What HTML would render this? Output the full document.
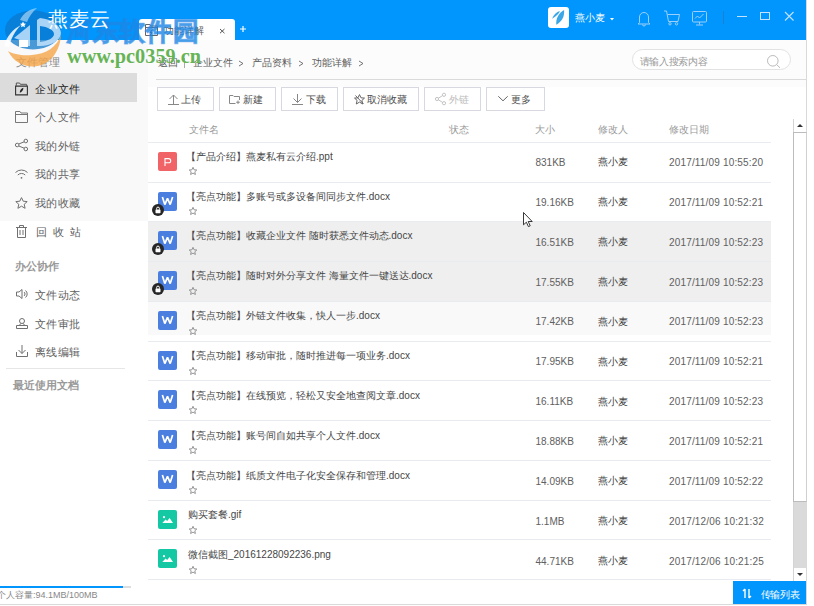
<!DOCTYPE html>
<html><head><meta charset="utf-8"><style>
*{box-sizing:border-box;margin:0;padding:0}
html,body{width:814px;height:606px;overflow:hidden;background:#fff;font-family:"Liberation Sans",sans-serif;font-size:10px;color:#333}
.t{position:absolute;white-space:nowrap;line-height:14px}
.r{position:absolute}
svg{position:absolute;overflow:visible}
</style></head><body>
<div class="r" style="left:0px;top:0px;width:806px;height:40px;background:#0096fd;"></div>
<div class="r" style="left:0px;top:40px;width:148px;height:181px;background:#f9f9f9;"></div>
<div class="r" style="left:148px;top:40px;width:658px;height:47px;background:#fcfcfc;"></div>
<div class="r" style="left:806px;top:0px;width:1px;height:605px;background:#d9d9d9;"></div>
<div class="r" style="left:0px;top:604px;width:807px;height:1px;background:#d9d9d9;"></div>
<div class="r" style="left:139px;top:19px;width:96px;height:21px;background:#fff;border-radius:3px 3px 0 0"></div>
<svg style="left:145px;top:24px" width="13" height="12" viewBox="0 0 13 12"><path d="M0.5 11.5V0.5H5L6 2H12.5V11.5Z M0.5 3.5H12.5" fill="none" stroke="#666"/><path d="M7.5 5.5L5 8.5H6.8L5.5 11" fill="none" stroke="#444"/></svg>
<div class="t" style="left:163.6px;top:24.1px;font-size:10px;color:#555;font-weight:normal;">功能详解</div>
<svg style="left:219.8px;top:28.6px" width="4.5" height="4.2" viewBox="0 0 4.5 4.2"><path d="M0 0L4.5 4.2M4.5 0L0 4.2" stroke="#555" stroke-width="1"/></svg>
<svg style="left:239.5px;top:26px" width="6" height="6" viewBox="0 0 6 6"><path d="M3 0V6M0 3H6" stroke="#fff" stroke-width="1.2"/></svg>
<div class="r" style="left:548px;top:7px;width:21px;height:21px;background:#fff;border-radius:3px"></div>
<svg style="left:548px;top:7px" width="21" height="21" viewBox="0 0 21 21"><path d="M8.3 17.8C7.8 11 10.5 6.5 16.1 3C16.6 10 13.8 14.5 8.3 17.8Z" fill="#3ba7e6"/><path d="M4.1 11.8C5.5 8 8.5 5 11.9 4.1C11.2 6.6 8.5 9.2 4.1 11.8Z" fill="#3ba7e6"/></svg>
<div class="t" style="left:575.4px;top:11.2px;font-size:10px;color:#fff;font-weight:normal;">燕小麦</div>
<svg style="left:610px;top:18px" width="4" height="2.5" viewBox="0 0 4 2.5"><path d="M0 0H4L2 2.5Z" fill="#fff"/></svg>
<svg style="left:637px;top:10px" width="14" height="16" viewBox="0 0 14 16"><path d="M2.5 12.5V7A4.5 4.5 0 0 1 11.5 7V12.5L13 14H1Z" fill="none" stroke="#9ccffb"/><path d="M5.5 14.5A1.5 1.5 0 0 0 8.5 14.5" fill="none" stroke="#9ccffb"/></svg>
<svg style="left:664px;top:10px" width="16" height="16" viewBox="0 0 16 16"><path d="M0 1H2.5L4.5 11.5H14L15.5 4.5H3.5" fill="none" stroke="#9ccffb"/><circle cx="6" cy="13.8" r="1.2" fill="none" stroke="#9ccffb"/><circle cx="12.5" cy="13.8" r="1.2" fill="none" stroke="#9ccffb"/></svg>
<svg style="left:692px;top:11px" width="15" height="15" viewBox="0 0 15 15"><rect x="0.5" y="0.5" width="14" height="10.5" rx="1" fill="none" stroke="#9ccffb"/><path d="M3 7.5L5.5 5 7.5 7 11.5 3" fill="none" stroke="#9ccffb"/><path d="M7.5 11V13.5M4 14H11" stroke="#9ccffb"/></svg>
<div class="r" style="left:723px;top:11px;width:1px;height:13px;background:#1b7fd2;"></div>
<div class="r" style="left:737px;top:16px;width:10px;height:1px;background:#c2e2fd;"></div>
<div class="r" style="left:760px;top:12px;width:10px;height:8px;background:transparent;border:1px solid #c2e2fd"></div>
<svg style="left:785px;top:12px" width="8.5" height="8.5" viewBox="0 0 8.5 8.5"><path d="M0 0L8.5 8.5M8.5 0L0 8.5" stroke="#c2e2fd" stroke-width="1.1"/></svg>
<div class="t" style="left:16.0px;top:55.0px;font-size:11px;color:#888;font-weight:normal;">文件管理</div>
<div class="r" style="left:0px;top:73px;width:137px;height:29px;background:#dcdcdc;"></div>
<svg style="left:15px;top:81.5px" width="13" height="13.5" viewBox="0 0 13 13.5"><path d="M0.6 12.9V4.1H12.4V12.9Z" fill="none" stroke="#333" stroke-width="1.1"/><path d="M1.3 3.9V1H4.6L5.4 2.3H11.6V3.9" fill="none" stroke="#555"/><path d="M4.8 10.8C4.6 8.8 6 6.6 8.4 5.8C8.4 8.2 7 10 4.8 10.8Z" fill="#222"/></svg>
<div class="t" style="left:35.3px;top:82.0px;font-size:11px;color:#222;font-weight:normal;letter-spacing:0.4px">企业文件</div>
<svg style="left:15px;top:111px" width="13" height="12" viewBox="0 0 13 12"><path d="M0.5 11.5V0.5H5L6 2H12.5V11.5Z M0.5 3.5H12.5" fill="none" stroke="#777"/></svg>
<div class="t" style="left:35.0px;top:109.8px;font-size:11px;color:#606060;font-weight:normal;letter-spacing:0.4px">个人文件</div>
<svg style="left:15px;top:139px" width="13" height="12" viewBox="0 0 13 12"><circle cx="2.2" cy="6" r="1.8" fill="none" stroke="#707070"/><circle cx="10.8" cy="2" r="1.8" fill="none" stroke="#707070"/><circle cx="10.8" cy="10" r="1.8" fill="none" stroke="#707070"/><path d="M3.8 5L9.2 2.8M3.8 7L9.2 9.2" stroke="#707070"/></svg>
<div class="t" style="left:35.0px;top:139.0px;font-size:11px;color:#606060;font-weight:normal;letter-spacing:0.4px">我的外链</div>
<svg style="left:15px;top:169px" width="13" height="10" viewBox="0 0 13 10"><path d="M0.5 3.5A8.5 8.5 0 0 1 12.5 3.5M2.8 6A5.2 5.2 0 0 1 10.2 6" fill="none" stroke="#707070"/><circle cx="6.5" cy="8.8" r="0.9" fill="#707070"/></svg>
<div class="t" style="left:35.0px;top:167.2px;font-size:11px;color:#606060;font-weight:normal;letter-spacing:0.4px">我的共享</div>
<svg style="left:15px;top:197px" width="13" height="12" viewBox="0 0 13 12"><path d="M6.5 0.6L8.2 4.2 12.2 4.6 9.2 7.3 10.1 11.3 6.5 9.2 2.9 11.3 3.8 7.3 0.8 4.6 4.8 4.2Z" fill="none" stroke="#707070"/></svg>
<div class="t" style="left:35.0px;top:196.3px;font-size:11px;color:#606060;font-weight:normal;letter-spacing:0.4px">我的收藏</div>
<svg style="left:16px;top:225px" width="11" height="13" viewBox="0 0 11 13"><path d="M1.5 3V12.5H9.5V3M0 2.5H11M3.5 2.5V0.5H7.5V2.5M4 5V10M7 5V10" fill="none" stroke="#707070"/></svg>
<div class="t" style="left:35.7px;top:224.8px;font-size:11px;color:#606060;font-weight:normal;letter-spacing:6.3px">回收站</div>
<div class="t" style="left:15.0px;top:259.0px;font-size:11px;color:#999;font-weight:bold;">办公协作</div>
<svg style="left:16px;top:289px" width="12" height="10" viewBox="0 0 12 10"><path d="M0.5 3H3L6 0.5V9.5L3 7H0.5Z" fill="none" stroke="#707070"/><path d="M8 3A2.5 2.5 0 0 1 8 7M9.5 1.5A4.5 4.5 0 0 1 9.5 8.5" fill="none" stroke="#707070"/></svg>
<div class="t" style="left:35.0px;top:288.0px;font-size:11px;color:#606060;font-weight:normal;letter-spacing:0.4px">文件动态</div>
<svg style="left:16px;top:318px" width="12" height="11" viewBox="0 0 12 11"><circle cx="6" cy="3" r="2.5" fill="none" stroke="#707070"/><path d="M4.5 5.5L3.5 7.5M7.5 5.5L8.5 7.5M0.5 7.5H11.5V10.5H0.5Z" fill="none" stroke="#707070"/></svg>
<div class="t" style="left:35.0px;top:317.0px;font-size:11px;color:#606060;font-weight:normal;letter-spacing:0.4px">文件审批</div>
<svg style="left:16px;top:345px" width="12" height="12" viewBox="0 0 12 12"><path d="M6 0V8.5M2.5 5L6 8.5 9.5 5M0.5 7V11.5H11.5V7" fill="none" stroke="#707070"/></svg>
<div class="t" style="left:35.0px;top:345.0px;font-size:11px;color:#606060;font-weight:normal;letter-spacing:0.4px">离线编辑</div>
<div class="r" style="left:6px;top:368px;width:119px;height:1px;background:#e6e6e6;"></div>
<div class="t" style="left:13.0px;top:378.0px;font-size:11px;color:#999;font-weight:bold;">最近使用文档</div>
<div class="t" style="left:158.4px;top:56.0px;font-size:10px;color:#606060;font-weight:normal;">返回</div>
<div class="r" style="left:184px;top:58px;width:1px;height:10px;background:#aaa;"></div>
<div class="t" style="left:192.6px;top:56.0px;font-size:10px;color:#606060;font-weight:normal;">企业文件</div>
<svg style="left:239.2px;top:60.5px" width="4" height="5" viewBox="0 0 4 5"><path d="M0 0L4 2.5 0 5" fill="none" stroke="#666" stroke-width="0.9"/></svg>
<div class="t" style="left:252.0px;top:56.0px;font-size:10px;color:#606060;font-weight:normal;">产品资料</div>
<svg style="left:298.8px;top:60.5px" width="4" height="5" viewBox="0 0 4 5"><path d="M0 0L4 2.5 0 5" fill="none" stroke="#666" stroke-width="0.9"/></svg>
<div class="t" style="left:311.9px;top:56.0px;font-size:10px;color:#606060;font-weight:normal;">功能详解</div>
<svg style="left:358.5px;top:60.5px" width="4" height="5" viewBox="0 0 4 5"><path d="M0 0L4 2.5 0 5" fill="none" stroke="#666" stroke-width="0.9"/></svg>
<div class="r" style="left:632px;top:49px;width:159px;height:21px;background:#fff;border:1px solid #e2e2e2;border-radius:11px"></div>
<div class="t" style="left:639.5px;top:54.5px;font-size:10px;color:#999;font-weight:normal;letter-spacing:-0.3px">请输入搜索内容</div>
<svg style="left:767px;top:54.5px" width="14" height="13" viewBox="0 0 14 13"><circle cx="5.8" cy="5.8" r="5.3" fill="none" stroke="#bbb"/><path d="M9.6 9.6L13 12.8" stroke="#bbb"/></svg>
<div class="r" style="left:156px;top:79px;width:650px;height:1px;background:#dadada;"></div>
<div class="r" style="left:157px;top:87px;width:57px;height:24px;background:#fff;border:1px solid #d8d9e0"></div>
<div class="r" style="left:219px;top:87px;width:57px;height:24px;background:#fff;border:1px solid #d8d9e0"></div>
<div class="r" style="left:281px;top:87px;width:57px;height:24px;background:#fff;border:1px solid #d8d9e0"></div>
<div class="r" style="left:343px;top:87px;width:76px;height:24px;background:#fff;border:1px solid #d8d9e0"></div>
<div class="r" style="left:424px;top:87px;width:57px;height:24px;background:#fff;border:1px solid #d8d9e0"></div>
<div class="r" style="left:486px;top:87px;width:59px;height:24px;background:#fff;border:1px solid #d8d9e0"></div>
<svg style="left:168px;top:93.5px" width="11" height="11" viewBox="0 0 11 11"><path d="M5.5 1V10M1.5 5L5.5 1 9.5 5M0 10.5H11" fill="none" stroke="#888"/></svg>
<div class="t" style="left:181.4px;top:92.5px;font-size:10px;color:#505050;font-weight:normal;">上传</div>
<svg style="left:229px;top:94.5px" width="12" height="9" viewBox="0 0 12 9"><path d="M6.5 8.5H0.5V0.5H4L5 1.5H10.5V5M9 5.5V9M7.2 7.25H10.8" fill="none" stroke="#888"/></svg>
<div class="t" style="left:242.9px;top:92.5px;font-size:10px;color:#505050;font-weight:normal;">新建</div>
<svg style="left:292px;top:93.5px" width="11" height="11" viewBox="0 0 11 11"><path d="M5.5 0V8.5M1.5 4.5L5.5 8.5 9.5 4.5M0 10.5H11" fill="none" stroke="#888"/></svg>
<div class="t" style="left:305.8px;top:92.5px;font-size:10px;color:#505050;font-weight:normal;">下载</div>
<svg style="left:354px;top:93.5px" width="11" height="11" viewBox="0 0 11 11"><path d="M5.5 0.6L7 3.8 10.5 4.1 7.9 6.4 8.7 10 5.5 8.1 2.3 10 3.1 6.4 0.5 4.1 4 3.8Z" fill="none" stroke="#666"/><path d="M1.5 1.5L9.5 10" stroke="#666"/></svg>
<div class="t" style="left:367.4px;top:92.5px;font-size:10px;color:#505050;font-weight:normal;">取消收藏</div>
<svg style="left:435px;top:92.5px" width="11" height="12" viewBox="0 0 11 12"><circle cx="2" cy="6" r="1.6" fill="none" stroke="#c4c4c4"/><circle cx="9" cy="1.8" r="1.6" fill="none" stroke="#c4c4c4"/><circle cx="9" cy="10.2" r="1.6" fill="none" stroke="#c4c4c4"/><path d="M3.4 5.2L7.6 2.6M3.4 6.8L7.6 9.4" stroke="#c4c4c4"/></svg>
<div class="t" style="left:448.8px;top:92.5px;font-size:10px;color:#bbb;font-weight:normal;">外链</div>
<svg style="left:498px;top:96px" width="10" height="5" viewBox="0 0 10 5"><path d="M0.3 0.3L5 4.8 9.7 0.3" fill="none" stroke="#666"/></svg>
<div class="t" style="left:511.0px;top:92.5px;font-size:10px;color:#505050;font-weight:normal;">更多</div>
<div class="r" style="left:148px;top:302px;width:623px;height:33px;background:#f9f9f9;"></div>
<div class="t" style="left:188.7px;top:123.4px;font-size:10px;color:#999;font-weight:normal;">文件名</div>
<div class="t" style="left:449.0px;top:123.4px;font-size:10px;color:#999;font-weight:normal;">状态</div>
<div class="t" style="left:535.2px;top:123.4px;font-size:10px;color:#999;font-weight:normal;">大小</div>
<div class="t" style="left:598.1px;top:123.4px;font-size:10px;color:#999;font-weight:normal;">修改人</div>
<div class="t" style="left:669.1px;top:123.4px;font-size:10px;color:#999;font-weight:normal;">修改日期</div>
<div class="r" style="left:148px;top:142px;width:623px;height:1px;background:#e8ecf1;"></div>
<div class="r" style="left:158px;top:152px;width:19px;height:19px;background:#f06468;border-radius:2px"></div>
<svg style="left:164px;top:157.5px" width="8" height="8" viewBox="0 0 8 8"><path d="M1 8V0.6H4.6A2.1 2.1 0 0 1 4.6 4.8H1" fill="none" stroke="#fff" stroke-width="1.1"/></svg>
<div class="t" style="left:186.0px;top:149.7px;font-size:10px;color:#464646;font-weight:normal;">【产品介绍】燕麦私有云介绍.ppt</div>
<svg style="left:188.5px;top:167px" width="8" height="8" viewBox="0 0 8 8"><path d="M4 0.3L5.1 2.8 7.8 3 5.8 4.8 6.4 7.5 4 6.1 1.6 7.5 2.2 4.8 0.2 3 2.9 2.8Z" fill="none" stroke="#8a8a8a" stroke-width="0.9"/></svg>
<div class="t" style="left:535.5px;top:156.0px;font-size:10px;color:#606060;font-weight:normal;">831KB</div>
<div class="t" style="left:598.2px;top:155.4px;font-size:10px;color:#404040;font-weight:normal;">燕小麦</div>
<div class="t" style="left:669.0px;top:156.0px;font-size:10px;color:#606060;font-weight:normal;letter-spacing:0.17px">2017/11/09 10:55:20</div>
<div class="r" style="left:148px;top:182px;width:623px;height:1px;background:#e8ecf1;"></div>
<div class="r" style="left:158px;top:192px;width:19px;height:19px;background:#4a7fe0;border-radius:2px"></div>
<svg style="left:162px;top:197.3px" width="11" height="8" viewBox="0 0 11 8"><path d="M0.4 0L2.8 7.6 5.5 1.3 8.2 7.6 10.6 0" fill="none" stroke="#fff" stroke-width="1.7" stroke-linejoin="miter" stroke-miterlimit="2"/></svg>
<svg style="left:152px;top:204.3px" width="12.5" height="12.5" viewBox="0 0 12.5 12.5"><circle cx="6" cy="6" r="6" fill="#262626"/><rect x="3.5" y="5.4" width="5" height="3.8" rx="0.6" fill="#fff"/><path d="M4.6 5.6V4.5a1.4 1.4 0 0 1 2.8 0V5.6" fill="none" stroke="#fff" stroke-width="1"/></svg>
<div class="t" style="left:186.0px;top:189.5px;font-size:10px;color:#464646;font-weight:normal;">【亮点功能】多账号或多设备间同步文件.docx</div>
<svg style="left:188.5px;top:207px" width="8" height="8" viewBox="0 0 8 8"><path d="M4 0.3L5.1 2.8 7.8 3 5.8 4.8 6.4 7.5 4 6.1 1.6 7.5 2.2 4.8 0.2 3 2.9 2.8Z" fill="none" stroke="#8a8a8a" stroke-width="0.9"/></svg>
<div class="t" style="left:535.5px;top:195.8px;font-size:10px;color:#606060;font-weight:normal;">19.16KB</div>
<div class="t" style="left:598.2px;top:195.2px;font-size:10px;color:#404040;font-weight:normal;">燕小麦</div>
<div class="t" style="left:669.0px;top:195.8px;font-size:10px;color:#606060;font-weight:normal;letter-spacing:0.17px">2017/11/09 10:52:21</div>
<div class="r" style="left:148px;top:221px;width:623px;height:40px;background:#efefef;"></div>
<div class="r" style="left:148px;top:221px;width:623px;height:1px;background:#e8ecf1;"></div>
<div class="r" style="left:158px;top:231px;width:19px;height:19px;background:#4a7fe0;border-radius:2px"></div>
<svg style="left:162px;top:236.3px" width="11" height="8" viewBox="0 0 11 8"><path d="M0.4 0L2.8 7.6 5.5 1.3 8.2 7.6 10.6 0" fill="none" stroke="#fff" stroke-width="1.7" stroke-linejoin="miter" stroke-miterlimit="2"/></svg>
<svg style="left:152px;top:243.3px" width="12.5" height="12.5" viewBox="0 0 12.5 12.5"><circle cx="6" cy="6" r="6" fill="#262626"/><rect x="3.5" y="5.4" width="5" height="3.8" rx="0.6" fill="#fff"/><path d="M4.6 5.6V4.5a1.4 1.4 0 0 1 2.8 0V5.6" fill="none" stroke="#fff" stroke-width="1"/></svg>
<div class="t" style="left:186.0px;top:229.4px;font-size:10px;color:#464646;font-weight:normal;">【亮点功能】收藏企业文件<span style='display:inline-block;width:2.5px'></span>随时获悉文件动态.docx</div>
<svg style="left:188.5px;top:247px" width="8" height="8" viewBox="0 0 8 8"><path d="M4 0.3L5.1 2.8 7.8 3 5.8 4.8 6.4 7.5 4 6.1 1.6 7.5 2.2 4.8 0.2 3 2.9 2.8Z" fill="none" stroke="#8a8a8a" stroke-width="0.9"/></svg>
<div class="t" style="left:535.5px;top:235.7px;font-size:10px;color:#606060;font-weight:normal;">16.51KB</div>
<div class="t" style="left:598.2px;top:235.1px;font-size:10px;color:#404040;font-weight:normal;">燕小麦</div>
<div class="t" style="left:669.0px;top:235.7px;font-size:10px;color:#606060;font-weight:normal;letter-spacing:0.17px">2017/11/09 10:52:23</div>
<div class="r" style="left:148px;top:261px;width:623px;height:40px;background:#efefef;"></div>
<div class="r" style="left:148px;top:261px;width:623px;height:1px;background:#e8ecf1;"></div>
<div class="r" style="left:158px;top:271px;width:19px;height:19px;background:#4a7fe0;border-radius:2px"></div>
<svg style="left:162px;top:276.3px" width="11" height="8" viewBox="0 0 11 8"><path d="M0.4 0L2.8 7.6 5.5 1.3 8.2 7.6 10.6 0" fill="none" stroke="#fff" stroke-width="1.7" stroke-linejoin="miter" stroke-miterlimit="2"/></svg>
<svg style="left:152px;top:283.3px" width="12.5" height="12.5" viewBox="0 0 12.5 12.5"><circle cx="6" cy="6" r="6" fill="#262626"/><rect x="3.5" y="5.4" width="5" height="3.8" rx="0.6" fill="#fff"/><path d="M4.6 5.6V4.5a1.4 1.4 0 0 1 2.8 0V5.6" fill="none" stroke="#fff" stroke-width="1"/></svg>
<div class="t" style="left:186.0px;top:269.2px;font-size:10px;color:#464646;font-weight:normal;">【亮点功能】随时对外分享文件<span style='display:inline-block;width:2.5px'></span>海量文件一键送达.docx</div>
<svg style="left:188.5px;top:287px" width="8" height="8" viewBox="0 0 8 8"><path d="M4 0.3L5.1 2.8 7.8 3 5.8 4.8 6.4 7.5 4 6.1 1.6 7.5 2.2 4.8 0.2 3 2.9 2.8Z" fill="none" stroke="#8a8a8a" stroke-width="0.9"/></svg>
<div class="t" style="left:535.5px;top:275.6px;font-size:10px;color:#606060;font-weight:normal;">17.55KB</div>
<div class="t" style="left:598.2px;top:274.9px;font-size:10px;color:#404040;font-weight:normal;">燕小麦</div>
<div class="t" style="left:669.0px;top:275.6px;font-size:10px;color:#606060;font-weight:normal;letter-spacing:0.17px">2017/11/09 10:52:23</div>
<div class="r" style="left:148px;top:301px;width:623px;height:1px;background:#e8ecf1;"></div>
<div class="r" style="left:158px;top:311px;width:19px;height:19px;background:#4a7fe0;border-radius:2px"></div>
<svg style="left:162px;top:316.3px" width="11" height="8" viewBox="0 0 11 8"><path d="M0.4 0L2.8 7.6 5.5 1.3 8.2 7.6 10.6 0" fill="none" stroke="#fff" stroke-width="1.7" stroke-linejoin="miter" stroke-miterlimit="2"/></svg>
<div class="t" style="left:186.0px;top:309.1px;font-size:10px;color:#464646;font-weight:normal;">【亮点功能】外链文件收集，快人一步.docx</div>
<svg style="left:188.5px;top:327px" width="8" height="8" viewBox="0 0 8 8"><path d="M4 0.3L5.1 2.8 7.8 3 5.8 4.8 6.4 7.5 4 6.1 1.6 7.5 2.2 4.8 0.2 3 2.9 2.8Z" fill="none" stroke="#8a8a8a" stroke-width="0.9"/></svg>
<div class="t" style="left:535.5px;top:315.4px;font-size:10px;color:#606060;font-weight:normal;">17.42KB</div>
<div class="t" style="left:598.2px;top:314.8px;font-size:10px;color:#404040;font-weight:normal;">燕小麦</div>
<div class="t" style="left:669.0px;top:315.4px;font-size:10px;color:#606060;font-weight:normal;letter-spacing:0.17px">2017/11/09 10:52:23</div>
<div class="r" style="left:148px;top:341px;width:623px;height:1px;background:#e8ecf1;"></div>
<div class="r" style="left:158px;top:351px;width:19px;height:19px;background:#4a7fe0;border-radius:2px"></div>
<svg style="left:162px;top:356.3px" width="11" height="8" viewBox="0 0 11 8"><path d="M0.4 0L2.8 7.6 5.5 1.3 8.2 7.6 10.6 0" fill="none" stroke="#fff" stroke-width="1.7" stroke-linejoin="miter" stroke-miterlimit="2"/></svg>
<div class="t" style="left:186.0px;top:348.9px;font-size:10px;color:#464646;font-weight:normal;">【亮点功能】移动审批，随时推进每一项业务.docx</div>
<svg style="left:188.5px;top:367px" width="8" height="8" viewBox="0 0 8 8"><path d="M4 0.3L5.1 2.8 7.8 3 5.8 4.8 6.4 7.5 4 6.1 1.6 7.5 2.2 4.8 0.2 3 2.9 2.8Z" fill="none" stroke="#8a8a8a" stroke-width="0.9"/></svg>
<div class="t" style="left:535.5px;top:355.2px;font-size:10px;color:#606060;font-weight:normal;">17.95KB</div>
<div class="t" style="left:598.2px;top:354.6px;font-size:10px;color:#404040;font-weight:normal;">燕小麦</div>
<div class="t" style="left:669.0px;top:355.2px;font-size:10px;color:#606060;font-weight:normal;letter-spacing:0.17px">2017/11/09 10:52:21</div>
<div class="r" style="left:148px;top:380px;width:623px;height:1px;background:#e8ecf1;"></div>
<div class="r" style="left:158px;top:390px;width:19px;height:19px;background:#4a7fe0;border-radius:2px"></div>
<svg style="left:162px;top:395.3px" width="11" height="8" viewBox="0 0 11 8"><path d="M0.4 0L2.8 7.6 5.5 1.3 8.2 7.6 10.6 0" fill="none" stroke="#fff" stroke-width="1.7" stroke-linejoin="miter" stroke-miterlimit="2"/></svg>
<div class="t" style="left:186.0px;top:388.8px;font-size:10px;color:#464646;font-weight:normal;">【亮点功能】在线预览，轻松又安全地查阅文章.docx</div>
<svg style="left:188.5px;top:406px" width="8" height="8" viewBox="0 0 8 8"><path d="M4 0.3L5.1 2.8 7.8 3 5.8 4.8 6.4 7.5 4 6.1 1.6 7.5 2.2 4.8 0.2 3 2.9 2.8Z" fill="none" stroke="#8a8a8a" stroke-width="0.9"/></svg>
<div class="t" style="left:535.5px;top:395.1px;font-size:10px;color:#606060;font-weight:normal;">16.11KB</div>
<div class="t" style="left:598.2px;top:394.5px;font-size:10px;color:#404040;font-weight:normal;">燕小麦</div>
<div class="t" style="left:669.0px;top:395.1px;font-size:10px;color:#606060;font-weight:normal;letter-spacing:0.17px">2017/11/09 10:52:23</div>
<div class="r" style="left:148px;top:420px;width:623px;height:1px;background:#e8ecf1;"></div>
<div class="r" style="left:158px;top:430px;width:19px;height:19px;background:#4a7fe0;border-radius:2px"></div>
<svg style="left:162px;top:435.3px" width="11" height="8" viewBox="0 0 11 8"><path d="M0.4 0L2.8 7.6 5.5 1.3 8.2 7.6 10.6 0" fill="none" stroke="#fff" stroke-width="1.7" stroke-linejoin="miter" stroke-miterlimit="2"/></svg>
<div class="t" style="left:186.0px;top:428.6px;font-size:10px;color:#464646;font-weight:normal;">【亮点功能】账号间自如共享个人文件.docx</div>
<svg style="left:188.5px;top:446px" width="8" height="8" viewBox="0 0 8 8"><path d="M4 0.3L5.1 2.8 7.8 3 5.8 4.8 6.4 7.5 4 6.1 1.6 7.5 2.2 4.8 0.2 3 2.9 2.8Z" fill="none" stroke="#8a8a8a" stroke-width="0.9"/></svg>
<div class="t" style="left:535.5px;top:434.9px;font-size:10px;color:#606060;font-weight:normal;">18.88KB</div>
<div class="t" style="left:598.2px;top:434.3px;font-size:10px;color:#404040;font-weight:normal;">燕小麦</div>
<div class="t" style="left:669.0px;top:434.9px;font-size:10px;color:#606060;font-weight:normal;letter-spacing:0.17px">2017/11/09 10:52:21</div>
<div class="r" style="left:148px;top:460px;width:623px;height:1px;background:#e8ecf1;"></div>
<div class="r" style="left:158px;top:470px;width:19px;height:19px;background:#4a7fe0;border-radius:2px"></div>
<svg style="left:162px;top:475.3px" width="11" height="8" viewBox="0 0 11 8"><path d="M0.4 0L2.8 7.6 5.5 1.3 8.2 7.6 10.6 0" fill="none" stroke="#fff" stroke-width="1.7" stroke-linejoin="miter" stroke-miterlimit="2"/></svg>
<div class="t" style="left:186.0px;top:468.5px;font-size:10px;color:#464646;font-weight:normal;">【亮点功能】纸质文件电子化安全保存和管理.docx</div>
<svg style="left:188.5px;top:486px" width="8" height="8" viewBox="0 0 8 8"><path d="M4 0.3L5.1 2.8 7.8 3 5.8 4.8 6.4 7.5 4 6.1 1.6 7.5 2.2 4.8 0.2 3 2.9 2.8Z" fill="none" stroke="#8a8a8a" stroke-width="0.9"/></svg>
<div class="t" style="left:535.5px;top:474.8px;font-size:10px;color:#606060;font-weight:normal;">14.09KB</div>
<div class="t" style="left:598.2px;top:474.2px;font-size:10px;color:#404040;font-weight:normal;">燕小麦</div>
<div class="t" style="left:669.0px;top:474.8px;font-size:10px;color:#606060;font-weight:normal;letter-spacing:0.17px">2017/11/09 10:52:22</div>
<div class="r" style="left:148px;top:500px;width:623px;height:1px;background:#e8ecf1;"></div>
<div class="r" style="left:158px;top:510px;width:19px;height:19px;background:#14c8a4;border-radius:2px"></div>
<svg style="left:158px;top:510px" width="19" height="19" viewBox="0 0 19 19"><circle cx="6" cy="7.2" r="1.1" fill="#fff"/><path d="M4.3 12.9L7.6 9.6 9.2 11.1 11.6 7.9 15 12.9Z" fill="#fff"/></svg>
<div class="t" style="left:188.0px;top:508.4px;font-size:10px;color:#464646;font-weight:normal;">购买套餐.gif</div>
<svg style="left:188.5px;top:526px" width="8" height="8" viewBox="0 0 8 8"><path d="M4 0.3L5.1 2.8 7.8 3 5.8 4.8 6.4 7.5 4 6.1 1.6 7.5 2.2 4.8 0.2 3 2.9 2.8Z" fill="none" stroke="#8a8a8a" stroke-width="0.9"/></svg>
<div class="t" style="left:535.5px;top:514.7px;font-size:10px;color:#606060;font-weight:normal;">1.1MB</div>
<div class="t" style="left:598.2px;top:514.1px;font-size:10px;color:#404040;font-weight:normal;">燕小麦</div>
<div class="t" style="left:669.0px;top:514.7px;font-size:10px;color:#606060;font-weight:normal;letter-spacing:0.17px">2017/12/06 10:21:32</div>
<div class="r" style="left:148px;top:539px;width:623px;height:1px;background:#e8ecf1;"></div>
<div class="r" style="left:158px;top:549px;width:19px;height:19px;background:#14c8a4;border-radius:2px"></div>
<svg style="left:158px;top:549px" width="19" height="19" viewBox="0 0 19 19"><circle cx="6" cy="7.2" r="1.1" fill="#fff"/><path d="M4.3 12.9L7.6 9.6 9.2 11.1 11.6 7.9 15 12.9Z" fill="#fff"/></svg>
<div class="t" style="left:188.0px;top:548.2px;font-size:10px;color:#464646;font-weight:normal;">微信截图_20161228092236.png</div>
<svg style="left:188.5px;top:566px" width="8" height="8" viewBox="0 0 8 8"><path d="M4 0.3L5.1 2.8 7.8 3 5.8 4.8 6.4 7.5 4 6.1 1.6 7.5 2.2 4.8 0.2 3 2.9 2.8Z" fill="none" stroke="#8a8a8a" stroke-width="0.9"/></svg>
<div class="t" style="left:535.5px;top:554.5px;font-size:10px;color:#606060;font-weight:normal;">44.71KB</div>
<div class="t" style="left:598.2px;top:553.9px;font-size:10px;color:#404040;font-weight:normal;">燕小麦</div>
<div class="t" style="left:669.0px;top:554.5px;font-size:10px;color:#606060;font-weight:normal;letter-spacing:0.17px">2017/12/06 10:21:25</div>
<div class="r" style="left:148px;top:579px;width:623px;height:1px;background:#e8ecf1;"></div>
<div class="r" style="left:793px;top:119px;width:1px;height:462px;background:#d4d4d4;"></div>
<div class="r" style="left:794px;top:501px;width:12px;height:67px;background:#dadada;"></div>
<svg style="left:797px;top:123.5px" width="6" height="3" viewBox="0 0 6 3"><path d="M0 3L3 0 6 3Z" fill="#333"/></svg>
<div class="r" style="left:793px;top:132px;width:14px;height:370px;background:#fff;border:1px solid #bcbcbc;border-right-color:#d0d0d0"></div>
<svg style="left:797px;top:572.5px" width="6" height="3" viewBox="0 0 6 3"><path d="M0 0L3 3 6 0Z" fill="#333"/></svg>
<div class="r" style="left:0px;top:586px;width:131px;height:2px;background:#ddd;"></div>
<div class="r" style="left:0px;top:586px;width:123px;height:2px;background:#0096fd;"></div>
<div class="t" style="left:-3.0px;top:587.9px;font-size:9px;color:#888;font-weight:normal;">个人容量:94.1MB/100MB</div>
<div class="r" style="left:733px;top:581px;width:73px;height:23px;background:#0096fd;"></div>
<svg style="left:743px;top:589px" width="8" height="9" viewBox="0 0 8 9"><path d="M2 0V9M0 2L2 0M6 0V9M8 7L6 9" fill="none" stroke="#fff" stroke-width="1.4"/></svg>
<div class="t" style="left:760.9px;top:587.7px;font-size:10px;color:#fff;font-weight:normal;letter-spacing:-0.4px">传输列表</div>
<svg style="left:522.7px;top:212.4px" width="10" height="16" viewBox="0 0 10 16"><path d="M0.5 0.5V12.8L3.4 10.2 5.4 14.6 7.2 13.8 5.2 9.5H9.2Z" fill="#fff" stroke="#222" stroke-width="0.9" stroke-linejoin="round"/></svg>
<svg style="left:0px;top:0px" width="70" height="70" viewBox="0 0 70 70"><ellipse cx="33" cy="30" rx="28" ry="19.5" fill="rgb(11,119,203)" fill-opacity="0.74"/><path d="M4 46C7 36 13 29 21 25C15 31 11 38 9 47Z" fill="#fff" fill-opacity="0.85"/><path d="M14 38L30 25V46H20V40Z" fill="#c2e2fc" fill-opacity="0.85"/><path d="M37 20L40 18C52 19 61 26 61 33C61 40 51 46 40 46H37Z M40 26V42C48 41 54 38 54 34C54 30 48 27 40 26Z" fill="#c2e2fc" fill-opacity="0.85" fill-rule="evenodd"/><rect x="19" y="40" width="9" height="7" fill="#fff"/><path d="M20 20C24 12 30 9 37 8C32 12 29 17 27 22Z" fill="#c2e2fc" fill-opacity="0.6"/><path d="M23 21.5L24 23.5 26 23.8 24.5 25.2 25 27.3 23 26.2 21 27.3 21.5 25.2 20 23.8 22 23.5Z" fill="#fff"/><path d="M8 51C14 63 26 68 38 66C52 63 60 50 61 35C57 47 46 54 32 55C22 56 13 54 8 51Z" fill="#f5a548" fill-opacity="0.8"/></svg>
<div class="t" style="left:66px;top:16px;font-size:26px;line-height:30px;font-weight:bold;color:rgba(30,135,230,0.56);-webkit-text-stroke:1.2px rgba(30,135,230,0.56);letter-spacing:0.7px">河东软件园</div>
<div class="t" style="left:67px;top:45px;font-family:'Liberation Serif',serif;font-size:21px;line-height:22px;font-weight:bold;color:#66b455;transform:scaleX(0.965);transform-origin:0 0">www.pc0359.cn</div>
<div class="t" style="left:48.0px;top:12.2px;font-size:20px;color:#fff;font-weight:300;letter-spacing:1px">燕麦云</div>
</body></html>
